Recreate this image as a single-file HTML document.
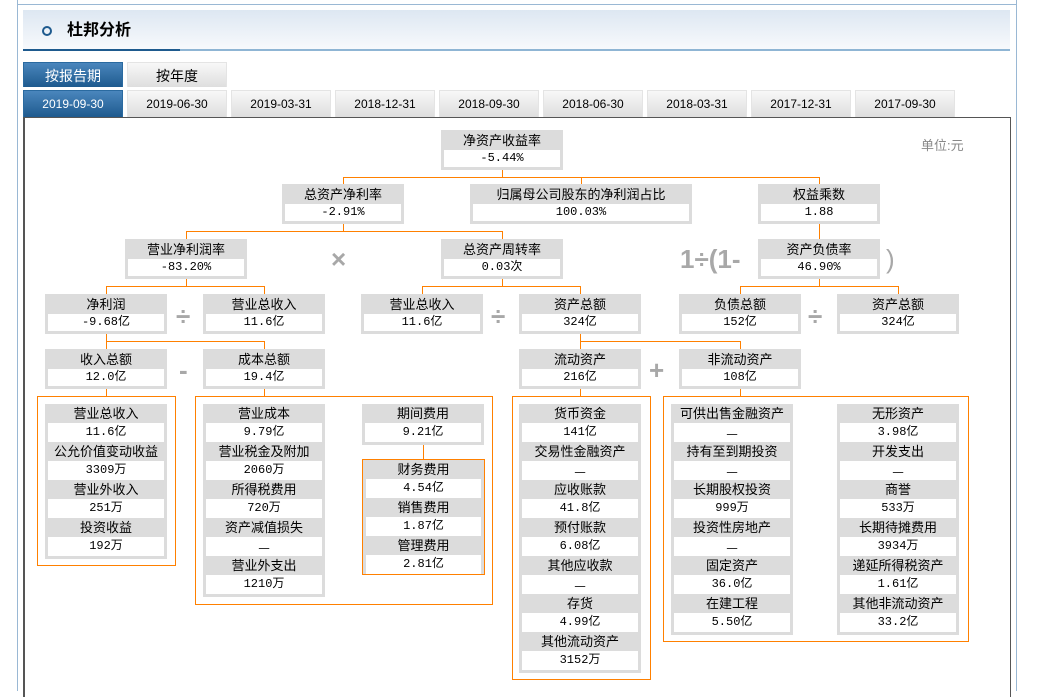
<!DOCTYPE html>
<html><head><meta charset="utf-8"><style>
*{margin:0;padding:0;box-sizing:border-box}
body{width:1047px;height:691px;background:#fff;position:relative;overflow:hidden;font-family:"Liberation Sans","Noto Sans CJK SC",sans-serif;font-size:13px;color:#000}
.a{position:absolute}
.b{position:absolute;background:#dcdcdc;padding:0 3px 3px 3px;text-align:center;height:40px}
.b .h{height:20px;line-height:21px;font-size:13px}
.b .v{height:17px;line-height:17px;background:#fff;font-family:"Liberation Mono","Noto Sans CJK SC",monospace;font-size:12px}
.s{position:absolute;background:#dcdcdc;padding:0 3px 3px 3px;text-align:center}
.s .h{height:19px;line-height:20px;font-size:13px}
.s .v{height:19px;line-height:19px;background:#fff;font-family:"Liberation Mono","Noto Sans CJK SC",monospace;font-size:12px}
.s .v.d{font-family:"Noto Sans CJK SC",sans-serif;font-size:13px}
.o{position:absolute;border:1px solid #ff8000}
.hl{position:absolute;height:1px;background:#ff8000}
.vl{position:absolute;width:1px;background:#ff8000}
.op{position:absolute;color:#a8a8a8;font-size:26px;font-weight:bold;line-height:26px;font-family:"Liberation Sans",sans-serif}
.t{position:absolute;height:27px;width:100px;text-align:center;line-height:27px;font-size:12px;background:linear-gradient(#f8f8f8,#dedede);border:1px solid #e4e4e4;border-bottom:none}
.t.on{background:linear-gradient(#4a86bd,#1e5a8e);color:#fff;border-color:#2a6aa0}
</style></head><body>
<div class="a" style="left:17px;top:0;width:1px;height:691px;background:#9ab8d4"></div>
<div class="a" style="left:1016px;top:0;width:1px;height:691px;background:#9ab8d4"></div>
<div class="a" style="left:17px;top:4px;width:1000px;height:1px;background:#9ab8d4"></div>
<div class="a" style="left:23px;top:10px;width:987px;height:39px;background:linear-gradient(#dde7f2,#f7f9fc)"></div>
<div class="a" style="left:42px;top:26px;width:10px;height:10px;border:2px solid #1e5a8e;border-radius:50%"></div>
<div class="a" style="left:67px;top:21px;font-size:16px;font-weight:bold;line-height:20px">杜邦分析</div>
<div class="a" style="left:23px;top:49px;width:157px;height:2px;background:#1e5a8e"></div>
<div class="a" style="left:180px;top:49px;width:830px;height:2px;background:#8fb5d4"></div>

<div class="t on" style="left:23px;top:62px;height:25px;font-size:14px">按报告期</div>
<div class="t" style="left:127px;top:62px;height:25px;font-size:14px">按年度</div>
<div class="t on" style="left:23px;top:90px">2019-09-30</div>
<div class="t" style="left:127px;top:90px">2019-06-30</div>
<div class="t" style="left:231px;top:90px">2019-03-31</div>
<div class="t" style="left:335px;top:90px">2018-12-31</div>
<div class="t" style="left:439px;top:90px">2018-09-30</div>
<div class="t" style="left:543px;top:90px">2018-06-30</div>
<div class="t" style="left:647px;top:90px">2018-03-31</div>
<div class="t" style="left:751px;top:90px">2017-12-31</div>
<div class="t" style="left:855px;top:90px">2017-09-30</div>

<div class="a" style="left:23px;top:117px;width:988px;height:580px;border:1px solid #555;border-width:1px 1px 0 2px"></div>
<div class="a" style="left:921px;top:135px;color:#888;font-size:13px">单位:元</div>

<div class="vl" style="left:502px;top:169px;height:8px"></div>
<div class="hl" style="left:343px;top:177px;width:477px"></div>
<div class="vl" style="left:343px;top:177px;height:7px"></div>
<div class="vl" style="left:581px;top:177px;height:7px"></div>
<div class="vl" style="left:819px;top:177px;height:7px"></div>
<div class="vl" style="left:343px;top:223px;height:8px"></div>
<div class="hl" style="left:186px;top:231px;width:317px"></div>
<div class="vl" style="left:186px;top:231px;height:8px"></div>
<div class="vl" style="left:502px;top:231px;height:8px"></div>
<div class="vl" style="left:819px;top:223px;height:16px"></div>
<div class="vl" style="left:186px;top:278px;height:8px"></div>
<div class="hl" style="left:106px;top:286px;width:159px"></div>
<div class="vl" style="left:106px;top:286px;height:8px"></div>
<div class="vl" style="left:264px;top:286px;height:8px"></div>
<div class="vl" style="left:502px;top:278px;height:8px"></div>
<div class="hl" style="left:422px;top:286px;width:159px"></div>
<div class="vl" style="left:422px;top:286px;height:8px"></div>
<div class="vl" style="left:580px;top:286px;height:8px"></div>
<div class="vl" style="left:819px;top:278px;height:8px"></div>
<div class="hl" style="left:740px;top:286px;width:159px"></div>
<div class="vl" style="left:740px;top:286px;height:8px"></div>
<div class="vl" style="left:898px;top:286px;height:8px"></div>
<div class="vl" style="left:106px;top:333px;height:8px"></div>
<div class="hl" style="left:106px;top:341px;width:159px"></div>
<div class="vl" style="left:106px;top:341px;height:8px"></div>
<div class="vl" style="left:264px;top:341px;height:8px"></div>
<div class="vl" style="left:580px;top:333px;height:16px"></div>
<div class="hl" style="left:580px;top:341px;width:161px"></div>
<div class="vl" style="left:740px;top:341px;height:8px"></div>
<div class="vl" style="left:106px;top:388px;height:8px"></div>
<div class="vl" style="left:264px;top:388px;height:8px"></div>
<div class="vl" style="left:580px;top:388px;height:8px"></div>
<div class="vl" style="left:740px;top:388px;height:8px"></div>
<div class="vl" style="left:423px;top:443px;height:17px"></div>

<div class="op" style="left:331px;top:246px">×</div>
<div class="op" style="left:176px;top:303px">÷</div>
<div class="op" style="left:491px;top:303px">÷</div>
<div class="op" style="left:808px;top:303px">÷</div>
<div class="op" style="left:179px;top:357px">-</div>
<div class="op" style="left:649px;top:357px">+</div>
<div class="op" style="left:680px;top:246px">1÷(1-</div>
<div class="op" style="left:886px;top:246px;font-weight:normal">)</div>

<div class="b" style="left:441px;top:130px;width:122px"><div class="h">净资产收益率</div><div class="v">-5.44%</div></div>
<div class="b" style="left:282px;top:184px;width:122px"><div class="h">总资产净利率</div><div class="v">-2.91%</div></div>
<div class="b" style="left:470px;top:184px;width:222px"><div class="h">归属母公司股东的净利润占比</div><div class="v">100.03%</div></div>
<div class="b" style="left:758px;top:184px;width:122px"><div class="h">权益乘数</div><div class="v">1.88</div></div>
<div class="b" style="left:125px;top:239px;width:122px"><div class="h">营业净利润率</div><div class="v">-83.20%</div></div>
<div class="b" style="left:441px;top:239px;width:122px"><div class="h">总资产周转率</div><div class="v">0.03次</div></div>
<div class="b" style="left:758px;top:239px;width:122px"><div class="h">资产负债率</div><div class="v">46.90%</div></div>
<div class="b" style="left:45px;top:294px;width:122px"><div class="h">净利润</div><div class="v">-9.68亿</div></div>
<div class="b" style="left:203px;top:294px;width:122px"><div class="h">营业总收入</div><div class="v">11.6亿</div></div>
<div class="b" style="left:361px;top:294px;width:122px"><div class="h">营业总收入</div><div class="v">11.6亿</div></div>
<div class="b" style="left:519px;top:294px;width:122px"><div class="h">资产总额</div><div class="v">324亿</div></div>
<div class="b" style="left:679px;top:294px;width:122px"><div class="h">负债总额</div><div class="v">152亿</div></div>
<div class="b" style="left:837px;top:294px;width:122px"><div class="h">资产总额</div><div class="v">324亿</div></div>
<div class="b" style="left:45px;top:349px;width:122px"><div class="h">收入总额</div><div class="v">12.0亿</div></div>
<div class="b" style="left:203px;top:349px;width:122px"><div class="h">成本总额</div><div class="v">19.4亿</div></div>
<div class="b" style="left:519px;top:349px;width:122px"><div class="h">流动资产</div><div class="v">216亿</div></div>
<div class="b" style="left:679px;top:349px;width:122px"><div class="h">非流动资产</div><div class="v">108亿</div></div>

<div class="o" style="left:37px;top:396px;width:139px;height:170px"></div>
<div class="s" style="left:45px;top:404px;width:122px"><div class="h">营业总收入</div><div class="v">11.6亿</div><div class="h">公允价值变动收益</div><div class="v">3309万</div><div class="h">营业外收入</div><div class="v">251万</div><div class="h">投资收益</div><div class="v">192万</div></div>

<div class="o" style="left:195px;top:396px;width:298px;height:209px"></div>
<div class="s" style="left:203px;top:404px;width:122px"><div class="h">营业成本</div><div class="v">9.79亿</div><div class="h">营业税金及附加</div><div class="v">2060万</div><div class="h">所得税费用</div><div class="v">720万</div><div class="h">资产减值损失</div><div class="v d">—</div><div class="h">营业外支出</div><div class="v">1210万</div></div>
<div class="s" style="left:362px;top:404px;width:122px"><div class="h">期间费用</div><div class="v">9.21亿</div></div>
<div class="o" style="left:362px;top:459px;width:123px;height:116px"></div>
<div class="s" style="left:363px;top:460px;width:121px;padding-bottom:0"><div class="h">财务费用</div><div class="v">4.54亿</div><div class="h">销售费用</div><div class="v">1.87亿</div><div class="h">管理费用</div><div class="v">2.81亿</div></div>

<div class="o" style="left:512px;top:396px;width:139px;height:284px"></div>
<div class="s" style="left:519px;top:404px;width:122px"><div class="h">货币资金</div><div class="v">141亿</div><div class="h">交易性金融资产</div><div class="v d">—</div><div class="h">应收账款</div><div class="v">41.8亿</div><div class="h">预付账款</div><div class="v">6.08亿</div><div class="h">其他应收款</div><div class="v d">—</div><div class="h">存货</div><div class="v">4.99亿</div><div class="h">其他流动资产</div><div class="v">3152万</div></div>

<div class="o" style="left:663px;top:396px;width:306px;height:246px"></div>
<div class="s" style="left:671px;top:404px;width:122px"><div class="h">可供出售金融资产</div><div class="v d">—</div><div class="h">持有至到期投资</div><div class="v d">—</div><div class="h">长期股权投资</div><div class="v">999万</div><div class="h">投资性房地产</div><div class="v d">—</div><div class="h">固定资产</div><div class="v">36.0亿</div><div class="h">在建工程</div><div class="v">5.50亿</div></div>
<div class="s" style="left:837px;top:404px;width:122px"><div class="h">无形资产</div><div class="v">3.98亿</div><div class="h">开发支出</div><div class="v d">—</div><div class="h">商誉</div><div class="v">533万</div><div class="h">长期待摊费用</div><div class="v">3934万</div><div class="h">递延所得税资产</div><div class="v">1.61亿</div><div class="h">其他非流动资产</div><div class="v">33.2亿</div></div>
</body></html>
